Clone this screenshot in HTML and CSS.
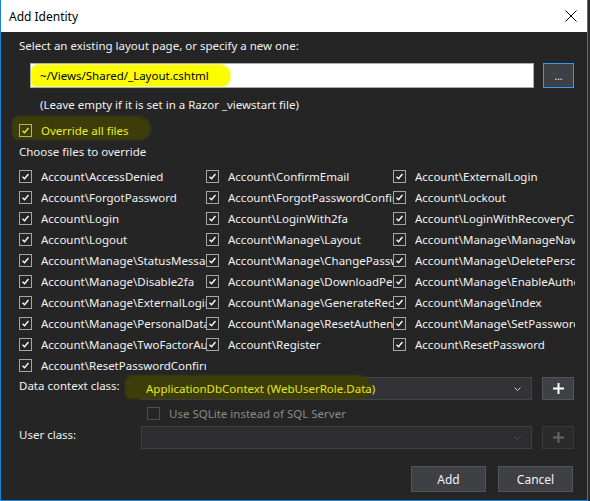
FILE: index.html
```html
<!DOCTYPE html>
<html>
<head>
<meta charset="utf-8">
<link rel="stylesheet" href="styles.css">
</head>
<body>
<div class="window">
  <div class="titlebar">
    <span class="title">Add Identity</span>
    <svg class="close" width="12" height="12" viewBox="0 0 12 12"><path d="M0.5 0.5 L11.5 11.5 M11.5 0.5 L0.5 11.5" stroke="#000" stroke-width="1" fill="none"/></svg>
  </div>
  <div class="content">
    <div class="line select-label">Select an existing layout page, or specify a new one:</div>
    <div class="layout-row">
      <div class="textbox"><span class="hl-yellow"></span><span class="textbox-text">~/Views/Shared/_Layout.cshtml</span></div>
      <button class="browse">...</button>
    </div>
    <div class="line hint">(Leave empty if it is set in a Razor _viewstart file)</div>
    <div class="override">
      <span class="hl-olive hl-override"></span>
      <span class="cb cb-yellow"><svg viewBox="0 0 13 13"><path d="M3 6.8 L5.4 9.2 L10 3.6" /></svg></span>
      <span class="override-text">Override all files</span>
    </div>
    <div class="line choose">Choose files to override</div>
    <div class="files">
      <div class="file"><span class="cb"><svg viewBox="0 0 13 13"><path d="M3 6.8 L5.4 9.2 L10 3.6"/></svg></span><span class="fname">Account\AccessDenied</span></div>
      <div class="file"><span class="cb"><svg viewBox="0 0 13 13"><path d="M3 6.8 L5.4 9.2 L10 3.6"/></svg></span><span class="fname">Account\ConfirmEmail</span></div>
      <div class="file"><span class="cb"><svg viewBox="0 0 13 13"><path d="M3 6.8 L5.4 9.2 L10 3.6"/></svg></span><span class="fname">Account\ExternalLogin</span></div>

      <div class="file"><span class="cb"><svg viewBox="0 0 13 13"><path d="M3 6.8 L5.4 9.2 L10 3.6"/></svg></span><span class="fname">Account\ForgotPassword</span></div>
      <div class="file"><span class="cb"><svg viewBox="0 0 13 13"><path d="M3 6.8 L5.4 9.2 L10 3.6"/></svg></span><span class="fname">Account\ForgotPasswordConfirmation</span></div>
      <div class="file"><span class="cb"><svg viewBox="0 0 13 13"><path d="M3 6.8 L5.4 9.2 L10 3.6"/></svg></span><span class="fname">Account\Lockout</span></div>

      <div class="file"><span class="cb"><svg viewBox="0 0 13 13"><path d="M3 6.8 L5.4 9.2 L10 3.6"/></svg></span><span class="fname">Account\Login</span></div>
      <div class="file"><span class="cb"><svg viewBox="0 0 13 13"><path d="M3 6.8 L5.4 9.2 L10 3.6"/></svg></span><span class="fname">Account\LoginWith2fa</span></div>
      <div class="file"><span class="cb"><svg viewBox="0 0 13 13"><path d="M3 6.8 L5.4 9.2 L10 3.6"/></svg></span><span class="fname">Account\LoginWithRecoveryCode</span></div>

      <div class="file"><span class="cb"><svg viewBox="0 0 13 13"><path d="M3 6.8 L5.4 9.2 L10 3.6"/></svg></span><span class="fname">Account\Logout</span></div>
      <div class="file"><span class="cb"><svg viewBox="0 0 13 13"><path d="M3 6.8 L5.4 9.2 L10 3.6"/></svg></span><span class="fname">Account\Manage\Layout</span></div>
      <div class="file"><span class="cb"><svg viewBox="0 0 13 13"><path d="M3 6.8 L5.4 9.2 L10 3.6"/></svg></span><span class="fname">Account\Manage\ManageNav</span></div>

      <div class="file"><span class="cb"><svg viewBox="0 0 13 13"><path d="M3 6.8 L5.4 9.2 L10 3.6"/></svg></span><span class="fname">Account\Manage\StatusMessage</span></div>
      <div class="file"><span class="cb"><svg viewBox="0 0 13 13"><path d="M3 6.8 L5.4 9.2 L10 3.6"/></svg></span><span class="fname">Account\Manage\ChangePassword</span></div>
      <div class="file"><span class="cb"><svg viewBox="0 0 13 13"><path d="M3 6.8 L5.4 9.2 L10 3.6"/></svg></span><span class="fname">Account\Manage\DeletePersonalData</span></div>

      <div class="file"><span class="cb"><svg viewBox="0 0 13 13"><path d="M3 6.8 L5.4 9.2 L10 3.6"/></svg></span><span class="fname">Account\Manage\Disable2fa</span></div>
      <div class="file"><span class="cb"><svg viewBox="0 0 13 13"><path d="M3 6.8 L5.4 9.2 L10 3.6"/></svg></span><span class="fname">Account\Manage\DownloadPersonalData</span></div>
      <div class="file"><span class="cb"><svg viewBox="0 0 13 13"><path d="M3 6.8 L5.4 9.2 L10 3.6"/></svg></span><span class="fname">Account\Manage\EnableAuthenticator</span></div>

      <div class="file"><span class="cb"><svg viewBox="0 0 13 13"><path d="M3 6.8 L5.4 9.2 L10 3.6"/></svg></span><span class="fname">Account\Manage\ExternalLogins</span></div>
      <div class="file"><span class="cb"><svg viewBox="0 0 13 13"><path d="M3 6.8 L5.4 9.2 L10 3.6"/></svg></span><span class="fname">Account\Manage\GenerateRecoveryCodes</span></div>
      <div class="file"><span class="cb"><svg viewBox="0 0 13 13"><path d="M3 6.8 L5.4 9.2 L10 3.6"/></svg></span><span class="fname">Account\Manage\Index</span></div>

      <div class="file"><span class="cb"><svg viewBox="0 0 13 13"><path d="M3 6.8 L5.4 9.2 L10 3.6"/></svg></span><span class="fname">Account\Manage\PersonalData</span></div>
      <div class="file"><span class="cb"><svg viewBox="0 0 13 13"><path d="M3 6.8 L5.4 9.2 L10 3.6"/></svg></span><span class="fname">Account\Manage\ResetAuthenticator</span></div>
      <div class="file"><span class="cb"><svg viewBox="0 0 13 13"><path d="M3 6.8 L5.4 9.2 L10 3.6"/></svg></span><span class="fname">Account\Manage\SetPassword</span></div>

      <div class="file"><span class="cb"><svg viewBox="0 0 13 13"><path d="M3 6.8 L5.4 9.2 L10 3.6"/></svg></span><span class="fname">Account\Manage\TwoFactorAuthentication</span></div>
      <div class="file"><span class="cb"><svg viewBox="0 0 13 13"><path d="M3 6.8 L5.4 9.2 L10 3.6"/></svg></span><span class="fname">Account\Register</span></div>
      <div class="file"><span class="cb"><svg viewBox="0 0 13 13"><path d="M3 6.8 L5.4 9.2 L10 3.6"/></svg></span><span class="fname">Account\ResetPassword</span></div>

      <div class="file"><span class="cb"><svg viewBox="0 0 13 13"><path d="M3 6.8 L5.4 9.2 L10 3.6"/></svg></span><span class="fname">Account\ResetPasswordConfirmation</span></div>
    </div>

    <div class="form-row data-row">
      <span class="form-label">Data context class:</span>
      <div class="combo">
        <span class="hl-olive hl-data"></span>
        <span class="combo-text">ApplicationDbContext (WebUserRole.Data)</span>
        <svg class="chev" width="7" height="4" viewBox="0 0 7 4"><path d="M0.5 0.5 L3.5 3.5 L6.5 0.5" stroke="#cfcfcf" fill="none" stroke-width="1"/></svg>
      </div>
      <button class="plus"><svg width="11" height="11" viewBox="0 0 11 11"><path d="M5.5 0 V11 M0 5.5 H11" stroke="#fff" stroke-width="2"/></svg></button>
    </div>
    <div class="sqlite">
      <span class="cb cb-disabled"></span>
      <span class="sqlite-text">Use SQLite instead of SQL Server</span>
    </div>
    <div class="form-row user-row">
      <span class="form-label">User class:</span>
      <div class="combo disabled">
        <svg class="chev" width="7" height="4" viewBox="0 0 7 4"><path d="M0.5 0.5 L3.5 3.5 L6.5 0.5" stroke="#555" fill="none" stroke-width="1"/></svg>
      </div>
      <button class="plus disabled"><svg width="11" height="11" viewBox="0 0 11 11"><path d="M5.5 0 V11 M0 5.5 H11" stroke="#666" stroke-width="2"/></svg></button>
    </div>
    <div class="actions">
      <button class="btn">Add</button>
      <button class="btn">Cancel</button>
    </div>
  </div>
</div>
</body>
</html>
```

FILE: styles.css
```css
* { box-sizing: border-box; }
html, body {
  margin: 0;
  padding: 0;
  background: #2a2a2a;
  width: 590px;
  height: 501px;
  overflow: hidden;
}
body {
  font-family: "Noto Sans", "Open Sans", sans-serif;
  font-size: 11.5px;
  color: #f1f1f1;
}
.window {
  width: 588px;
  height: 501px;
  border: 1px solid #1883d7;
  border-top: none;
  background: #252526;
  display: flex;
  flex-direction: column;
}
.titlebar {
  height: 32px;
  background: #ffffff;
  display: flex;
  align-items: center;
  justify-content: space-between;
  padding: 0 10px 0 8px;
  color: #000;
  font-size: 12px;
}
.content {
  flex: 1;
  padding: 0 0 0 18px;
  display: flex;
  flex-direction: column;
}
.line { height: 17px; line-height: 17px; white-space: nowrap; }
.select-label { margin-top: 5px; }
.layout-row {
  display: flex;
  margin-top: 9px;
  margin-left: 11px;
  height: 25px;
}
.textbox {
  position: relative;
  width: 504px;
  height: 25px;
  background: #fff;
  border: 1px solid #aaa;
  color: #000;
  display: flex;
  align-items: center;
  padding-left: 9px;
}
.textbox-text { position: relative; }
.hl-yellow {
  position: absolute;
  left: 1px;
  top: 1px;
  width: 198px;
  height: 21px;
  background: #fbfd00;
  border-radius: 6px 10px 8px 4px;
  box-shadow: 0 0 2px 1px rgba(230,230,0,0.6);
}
.browse {
  margin-left: 9px;
  width: 31px;
  height: 25px;
  background: #3f3f46;
  border: 1px solid #3399ff;
  color: #f1f1f1;
  font-family: inherit;
  font-size: 10px;
  padding: 0;
  line-height: 20px;
}
.hint { margin-top: 8px; margin-left: 21px; }
.override {
  position: relative;
  margin-top: 9px;
  height: 17px;
  display: flex;
  align-items: center;
}
.hl-olive {
  position: absolute;
  background: #3d3d0a;
  border-radius: 8px 14px 12px 6px;
  filter: blur(1px);
}
.hl-override {
  left: -7px;
  top: -6px;
  width: 139px;
  height: 24px;
}
.override-text {
  position: relative;
  color: #e9ed2a;
  margin-left: 9px;
}
.choose { margin-top: 4px; }
.cb {
  position: relative;
  display: inline-flex;
  width: 13px;
  height: 13px;
  border: 1px solid #a6a6a6;
  flex: none;
}
.cb svg {
  width: 11px;
  height: 11px;
  fill: none;
  stroke: #ffffff;
  stroke-width: 1.6;
}
.cb-yellow { border-color: #b6b84a; }
.cb-yellow svg { stroke: #eef03a; }
.cb-disabled { border-color: #4e4e52; }
.files {
  margin-top: 6px;
  display: grid;
  grid-template-columns: 187px 187px 182px;
  grid-auto-rows: 21px;
  width: 556px;
}
.file {
  display: flex;
  align-items: center;
  overflow: hidden;
  white-space: nowrap;
  height: 21px;
}
.fname {
  margin-left: 9px;
  overflow: hidden;
  flex: 1;
  white-space: nowrap;
}
.form-row {
  display: flex;
  align-items: flex-start;
  height: 23px;
}
.data-row { margin-top: 1px; }
.form-label {
  width: 122px;
  line-height: 17px;
}
.combo {
  position: relative;
  width: 391px;
  height: 23px;
  background: #333337;
  border: 1px solid #434346;
  display: flex;
  align-items: center;
  padding-left: 4px;
}
.hl-data {
  left: -17px;
  top: -3px;
  width: 246px;
  height: 24px;
}
.combo-text {
  position: relative;
  color: #e2e61a;
}
.chev {
  position: absolute;
  right: 10px;
  top: 9px;
}
.plus {
  margin-left: 10px;
  width: 32px;
  height: 23px;
  background: #3f3f46;
  border: 1px solid #555;
  padding: 0;
  display: flex;
  align-items: center;
  justify-content: center;
}
.combo.disabled { background: #2d2d30; border-color: #3f3f46; }
.plus.disabled { background: #2b2b2b; border-color: #3a3a3a; }
.sqlite {
  display: flex;
  align-items: center;
  margin-top: 6px;
  margin-left: 128px;
  height: 14px;
}
.sqlite-text { margin-left: 9px; color: #8a8a8a; }
.user-row { margin-top: 6px; }
.actions {
  display: flex;
  justify-content: flex-end;
  gap: 12px;
  margin-top: 17px;
  padding-right: 14px;
}
.btn {
  width: 75px;
  height: 26px;
  background: #3f3f46;
  border: 1px solid #555;
  color: #f1f1f1;
  font-family: inherit;
  font-size: 12px;
  padding: 0;
}
```
